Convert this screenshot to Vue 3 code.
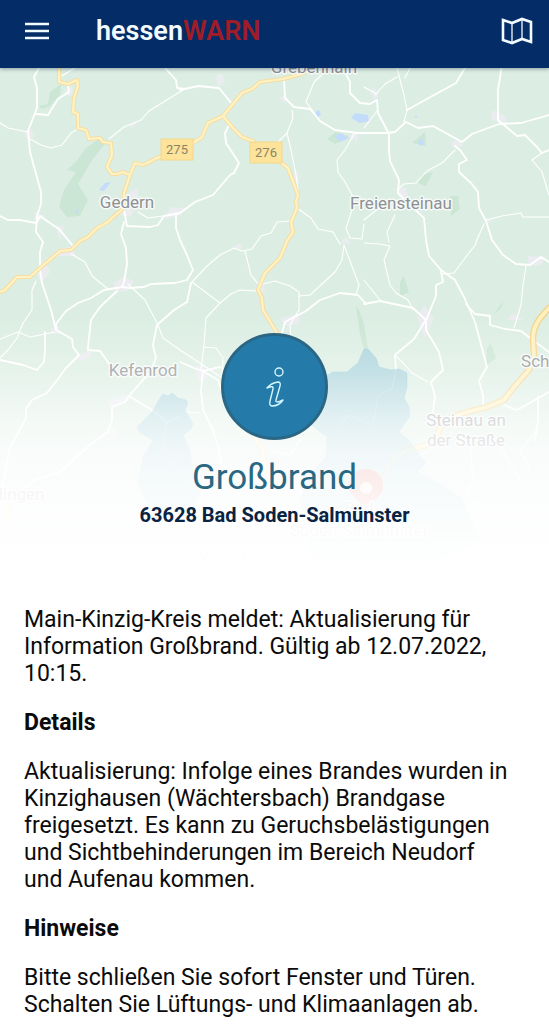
<template>
  <div class="page">
    <header class="app-bar">
      <button class="icon-btn" type="button" aria-label="Menü">
        <svg width="26" height="18" viewBox="0 0 26 18">
          <path d="M1 2h24M1 9h24M1 16h24" stroke="#f2fbff" stroke-width="2.6" />
        </svg>
      </button>
      <h1 class="brand">hessen<span>WARN</span></h1>
      <button class="icon-btn" type="button" aria-label="Karte">
        <svg width="32" height="28" viewBox="0 0 32 28" fill="none" stroke="#f2fbff">
          <path d="M2 3L11 6L21 2L30 5V25L21 22L11 26L2 23Z" stroke-width="2.6" />
          <path d="M11 6V26M21 2V22" stroke-width="1.3" />
        </svg>
      </button>
    </header>

    <section class="hero">
      <svg class="map" viewBox="0 68 549 502" preserveAspectRatio="xMidYMin slice" aria-hidden="true">
        <rect y="68" width="549" height="502" fill="#dceee3" />
        <path v-for="(d, i) in forests" :key="'f' + i" :d="d" fill="#cbe6d4" />
        <path v-for="(d, i) in lakes" :key="'l' + i" :d="d" fill="#c4dcfb" />
        <path v-for="(d, i) in towns" :key="'t' + i" :d="d" fill="#eaecf0" />
        <g fill="none" stroke="#fff" stroke-linejoin="round" stroke-linecap="round">
          <path v-for="(d, i) in lanes" :key="'a' + i" :d="d" stroke-width="1.1" />
          <path v-for="(d, i) in roads" :key="'r' + i" :d="d" stroke-width="1.8" />
        </g>
        <g fill="none" stroke-linejoin="round" stroke-linecap="round">
          <path v-for="(d, i) in highways" :key="'h' + i" :d="d" stroke="#f6dda0" stroke-width="4.2" />
          <path v-for="(d, i) in highways" :key="'i' + i" :d="d" stroke="#fff2c4" stroke-width="2.2" />
          <path :d="motorway" stroke="#f3d28b" stroke-width="6.4" />
          <path :d="motorway" stroke="#fff0bd" stroke-width="3.8" />
        </g>
        <g fill="#7dbbd3" fill-opacity="0.52" stroke="#7dbbd3" stroke-opacity="0.3">
          <path v-for="(d, i) in areas" :key="'w' + i" :d="d" />
        </g>
        <g fill-opacity="0.8">
          <path d="M366 512C364 500 349 499 349 486A17 17 0 0 1 383 486C383 499 368 500 366 512Z" fill="#ea4335" />
          <circle cx="366" cy="488" r="6" fill="#fff" />
        </g>
        <g v-for="s in shields" :key="s.text">
          <rect :x="s.x" :y="s.y" width="32" height="21" fill="#fde49a" stroke="#f2d88c" />
          <text :x="s.x + 16" :y="s.y + 15" class="shield">{{ s.text }}</text>
        </g>
        <text v-for="l in labels" :key="l.text" :x="l.x" :y="l.y" class="label">{{ l.text }}</text>
      </svg>
      <div class="fade"></div>
      <div class="badge">
        <svg width="24" height="44" viewBox="0 0 24 44" fill="none" stroke="#d5f6ff" stroke-width="1.4" stroke-linejoin="round" stroke-linecap="round">
          <circle cx="16" cy="7" r="4" />
          <path d="M4 23Q8 18 15 17Q18 17 17 21L13 35Q12 39 20 35Q16 41 9 41Q6 41 7 36L10 24Q11 20 4 23Z" />
        </svg>
      </div>
      <h2 class="title">Großbrand</h2>
      <p class="place">63628 Bad Soden-Salmünster</p>
    </section>

    <main class="message">
      <p>Main-Kinzig-Kreis meldet: Aktualisierung für Information Großbrand. Gültig ab 12.07.2022, 10:15.</p>
      <template v-for="s in sections" :key="s.heading">
        <h3>{{ s.heading }}</h3>
        <p>{{ s.text }}</p>
      </template>
    </main>
  </div>
</template>

<script setup>
const sections = [
  {
    heading: 'Details',
    text: 'Aktualisierung: Infolge eines Brandes wurden in Kinzighausen (Wächtersbach) Brandgase freigesetzt. Es kann zu Geruchsbelästigungen und Sichtbehinderungen im Bereich Neudorf und Aufenau kommen.'
  },
  {
    heading: 'Hinweise',
    text: 'Bitte schließen Sie sofort Fenster und Türen. Schalten Sie Lüftungs- und Klimaanlagen ab.'
  }
]

const labels = [
  { text: 'Grebenhain', x: 314, y: 73 },
  { text: 'Gedern', x: 127, y: 208 },
  { text: 'Freiensteinau', x: 401, y: 209 },
  { text: 'Kefenrod', x: 143, y: 376 },
  { text: 'Schlüchtern', x: 566, y: 367 },
  { text: 'Steinau an', x: 466, y: 426 },
  { text: 'der Straße', x: 466, y: 446 },
  { text: 'Büdingen', x: 9, y: 500 },
  { text: 'Bad', x: 359, y: 514 },
  { text: 'Soden-Salmünster', x: 359, y: 536 },
  { text: 'Wächtersbach', x: 254, y: 564 }
]

const shields = [
  { text: '275', x: 161, y: 139 },
  { text: '276', x: 250, y: 142 }
]

const highways = [
  'M59 66V82L68 84L77 80L78 86L74 98L73 112L78 114V128L86 130L89 139L100 138L103 142L111 143L112 155L107 167L112 174L117 174L123 172L130 175L124 193V208L113 217L108 222L97 228L88 237L80 241L71 250L60 251L40 268L30 277L17 277L5 290L0 292',
  'M130 175L135 163L143 165L157 158L177 150L193 143L202 137L208 123L223 116L242 93L252 89L260 82L283 79L302 74L312 68',
  'M223 116L233 128L242 137L253 141L266 152L280 162L288 168L298 195L296 202L297 208L291 222L293 232L287 241L280 258L265 273L258 290L262 298L263 310L277 333',
  'M255 438L262 448L266 470L280 490',
  'M7 505L8 530L6 555'
]

const motorway = 'M549 308L541 317Q533 327 533 338L534 355L529 370L514 387L504 400L487 407L467 412L452 417L441 425L437 436L428 445L407 450L394 458L384 477L360 492'

// filled regional roads
const roads = [
  'M39 68L34 77L37 88V108L28 131L30 152L41 192V204L37 216L36 232L43 242L40 252V270L42 283L51 310L56 330L72 339L73 347L79 355L65 369L58 379L47 393L32 400L26 409V418L9 450L4 480L0 495',
  'M0 216L8 220L20 220L36 223L40 216L50 223L59 229L73 246L80 243',
  'M68 85L69 92L58 99L48 115L36 114',
  'M165 68L176 80L177 88L185 89M180 90L198 86L219 88L232 104',
  'M229 125L225 133L226 143L239 163L234 173L230 175L213 195L195 202L180 213L164 216L158 225L150 227L127 226L124 210',
  'M124 222L121 234L126 248L127 264L124 282L122 287L104 290L91 298L78 303L66 311L56 324V330',
  'M117 291L100 307L91 320L88 347L88 350L100 351L110 365',
  'M122 287L130 288L144 287L151 284L175 283L187 280L193 270L187 255L180 240L176 228V215',
  'M45 332V350L44 362L37 370L23 365L0 360',
  'M187 302L174 310L157 325L153 345L156 358L150 373L142 381L129 396L125 402L112 407V420L108 432L91 444L60 472L35 480L17 493L0 500',
  'M129 396L155 412L167 423L180 417',
  'M284 79L285 98L294 107L310 109L320 121L335 130L357 133L386 133L395 132L406 122L418 128L433 126L462 142L472 134L499 124L521 123L549 115',
  'M343 68L350 82V93L360 103L370 104L377 100L378 113L389 134V150L390 161L399 180L398 193L410 205L424 218L426 240L429 256L441 270L455 280L464 297L475 322L487 367L479 381L483 395V407',
  'M465 68L456 83L425 100L407 110',
  'M502 65L498 90V120L510 130L517 136L525 135L537 147L542 153L549 150',
  'M455 146L460 150L467 160L459 164L459 172L471 183L478 192L479 208L486 221L492 240L503 255L516 264L530 265L541 257L549 262',
  'M466 304L475 314L490 316V325L505 329L521 331L530 338L549 352',
  'M364 304L380 301L413 308L426 320V330L439 352L443 370L431 382L435 396L433 412',
  'M441 271L443 282L436 285L436 296L427 318L414 339L395 355L396 370',
  'M282 333L285 322L306 311L320 300L340 293L358 295L366 304',
  'M180 362L194 368L203 371L220 367M203 371L201 390L203 410L213 430L219 450L222 470M203 371L218 380L223 395',
  'M504 405L517 410L535 400L549 392M538 397V420L535 440',
  'M187 302L191 283'
]

// narrow lanes
const lanes = [
  'M0 123L8 128L28 132M30 139L41 145L51 148L62 145L71 133L78 129',
  'M109 139L124 127L141 120L149 111L165 101L183 90',
  'M58 78L75 68',
  'M36 281L32 290V310L23 323L17 338L8 350L0 358M0 339L18 332L30 337L55 332',
  'M71 254L85 262L92 276L108 289',
  'M128 284L145 300L158 325L163 338L180 350L203 365L225 380',
  'M138 212L148 218L163 216',
  'M292 110L293 118L287 133L278 142M287 133L291 150L296 175L298 190',
  'M325 72L314 82L306 102L316 115',
  'M354 134L345 150L337 160L338 172L345 182L352 195V210L346 228L350 238L362 239L364 224',
  'M297 208L311 218L318 229L333 232L340 244M291 221L277 222L271 233L261 236L252 249L242 251L234 248L220 255L207 266L192 282L220 303L231 294L240 290L257 291',
  'M245 251L251 275L259 285L275 281L290 286L299 292V310L290 325L291 338',
  'M299 296L310 295L335 272L342 260L344 245L359 285L356 295',
  'M220 303L206 318L204 345L201 370M204 347L216 348L223 358L222 376',
  'M397 68L404 95L407 110L404 122M397 77L385 84L375 95M410 68L405 78M364 87L377 94M364 128L377 111',
  'M455 150L442 163L427 171L416 183L404 184L397 190',
  'M395 215L387 232L389 242M364 220L380 207L396 200',
  'M486 220L502 216L521 213L523 217L549 217M484 224L476 242V244L465 258L454 273L443 274',
  'M542 153L532 160L542 172L549 195M526 266L523 285L521 305L514 328',
  'M364 243L380 244L390 246L384 260L390 285L396 293L408 300L413 310M364 280L380 300',
  'M395 355L405 365L412 373L428 382',
  'M396 370L392 388L378 396L373 425L350 415L338 426',
  'M185 412L200 413M168 420L162 440L170 458L188 480L210 492',
  'M430 450L408 462L392 482L378 500M470 445L472 468L473 480L466 495L480 508M538 430L520 450L530 470',
  'M500 445L510 465L520 480M300 440L290 455L270 450'
]

const towns = [
  'M23 132L31 129L34 137L27 139Z',
  'M64 90L72 87L73 95L67 96Z',
  'M124 196L137 188L139 204L130 217L118 214Z',
  'M35 212L45 216L38 223L34 220Z',
  'M56 227L64 225L60 240Z',
  'M57 250L72 246L76 256L58 256Z',
  'M36 271L44 260L50 272L41 284Z',
  'M113 283L124 277L134 281L127 291L115 292Z',
  'M79 355L90 350L91 356L82 361L76 359Z',
  'M51 329L58 325L61 334L51 334Z',
  'M215 77L221 73L225 81L219 87Z',
  'M128 125L138 121L133 128Z',
  'M165 219L170 207L184 208L180 216Z',
  'M279 99L284 95L287 103Z',
  'M292 178L298 170L299 184Z',
  'M348 136L358 133L357 142Z',
  'M370 92L374 86L378 97L375 101Z',
  'M492 110L505 116L506 124L491 120Z',
  'M450 143L459 139L463 146L453 147Z',
  'M398 188L406 188L408 199L398 196Z',
  'M484 218L493 221L487 223Z',
  'M340 242L347 236L350 245Z',
  'M417 318L424 305L434 319L425 338Z',
  'M507 320L513 313L523 320Z',
  'M528 256L546 257L540 266L528 265Z',
  'M280 319L299 313L299 324L287 326Z',
  'M253 290L263 284L265 293Z',
  'M195 366L204 365L208 378L198 382Z',
  'M106 402L128 394L130 400L112 408Z',
  'M233 248L240 243L243 249Z',
  'M107 430L116 428L118 438L108 440Z'
]

const forests = [
  'M39 106L48 104L50 92L61 84L60 95L50 106L42 109Z',
  'M67 170L76 162L86 148L102 137L105 144L92 160L85 172L78 184L88 200L80 216L67 217L59 207L64 190L76 172Z',
  'M412 143L425 132L426 146Z',
  'M418 183L422 175L433 172L426 186Z',
  'M450 196L458 196L460 209L451 216Z',
  'M327 139L336 132L350 137L335 144Z',
  'M400 282L404 276L409 292L400 296Z',
  'M487 348L491 344L496 358L486 366Z',
  'M493 315L504 300L501 308Z',
  'M356 305L360 312L364 325L368 349H364L360 335Z'
]

const lakes = [
  'M99 190L105 183L111 182L104 191Z',
  'M334 136L341 133L349 138L340 142Z',
  'M351 118L355 113L368 115L369 121L360 123Z',
  'M315 112L319 110L321 115L317 117Z',
  'M418 142L422 138L424 144L420 146Z',
  'M414 116L418 116L416 118Z',
  'M75 210L79 210L77 214Z'
]

// shaded warning districts
const areas = [
  'M311 560L300 500L311 473L326 457L327 437L311 425L320 380L333 372L347 372L358 363L364 349H368L376 358L379 367L391 370L399 369L407 373L407 387L404 398L409 407L410 416L399 432L409 440L426 463L417 472L441 485L461 497L480 540L440 560Z',
  'M137 427L147 417L152 412L160 398L163 394L168 396L172 393L178 398L186 400L188 403L185 410L193 424L190 430L183 435L190 450L193 473L200 492L190 515L150 510L138 483L143 457L153 440L140 433Z'
]
</script>

<style>
body {
  margin: 0;
  background: #fff;
}
</style>

<style scoped>
.page {
  font-family: Roboto, Arial, sans-serif;
  color: #0b0b0b;
}
.app-bar {
  position: relative;
  z-index: 1;
  display: flex;
  align-items: center;
  height: 68px;
  padding: 0 16px 6px 24px;
  box-sizing: border-box;
  background: #042c66;
  box-shadow: 0 1px 4px rgba(0, 30, 60, 0.4);
}
.icon-btn {
  display: flex;
  padding: 0;
  border: none;
  background: none;
  cursor: pointer;
}
.brand {
  flex: 1;
  margin: 0 0 0 46px;
  font-size: 27px;
  font-weight: 600;
  line-height: 32px;
  color: #f2fbff;
}
.brand span {
  color: #a01d28;
}
.hero {
  position: relative;
  display: flex;
  flex-direction: column;
  align-items: center;
  padding: 265px 16px 40px;
  text-align: center;
}
.map,
.fade {
  position: absolute;
  top: 0;
  left: 0;
  width: 100%;
  height: 100%;
}
.fade {
  background: linear-gradient(
    rgba(255, 255, 255, 0) 50%,
    rgba(255, 255, 255, 0.3) 61%,
    rgba(255, 255, 255, 0.66) 70%,
    rgba(255, 255, 255, 0.84) 77%,
    rgba(255, 255, 255, 0.92) 86%,
    rgba(255, 255, 255, 0.96) 93%,
    #fff 100%
  );
}
.label,
.shield {
  font-size: 17px;
  fill: #8f9094;
  text-anchor: middle;
}
.label {
  stroke: #f5faf7;
  stroke-width: 3px;
  stroke-linejoin: round;
  paint-order: stroke;
}
.shield {
  font-size: 13px;
  fill: #8a8468;
}
.badge {
  position: relative;
  display: flex;
  align-items: center;
  justify-content: center;
  width: 107px;
  height: 107px;
  box-sizing: border-box;
  border: 3px solid #2b6685;
  border-radius: 50%;
  background: #247ba9;
}
.title {
  position: relative;
  margin: 16px 0 0;
  font-size: 35px;
  font-weight: 400;
  line-height: 44px;
  color: #2a6783;
}
.place {
  position: relative;
  margin: 3px 0 0;
  font-size: 20px;
  font-weight: 700;
  line-height: 24px;
  color: #0a2342;
}
.message {
  padding: 39px 32px 6px 24px;
  font-size: 23px;
  line-height: 27px;
}
.message p,
.message h3 {
  margin: 0 0 22px;
}
.message p:last-child {
  margin-bottom: 0;
}
.message h3 {
  font-size: 23px;
  font-weight: 700;
}
</style>
